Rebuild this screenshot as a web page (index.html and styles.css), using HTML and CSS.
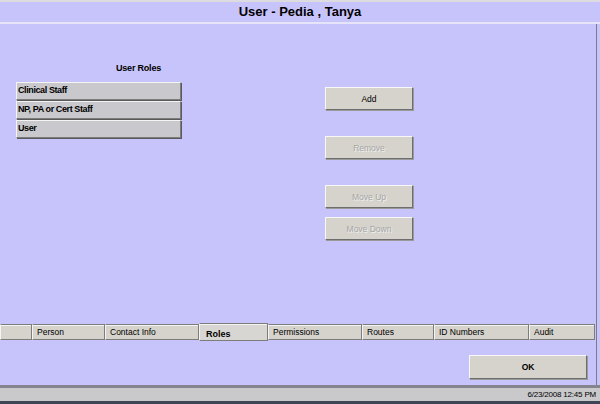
FILE: index.html
```html
<!DOCTYPE html>
<html>
<head>
<meta charset="utf-8">
<link rel="stylesheet" href="styles.css">
</head>
<body>
<div class="screen">
  <div class="topstrip"></div>
  <div class="titlebar">User - Pedia , Tanya</div>
  <div class="frame">
    <div class="main">
      <div class="roles">
        <div class="roles-label">User Roles</div>
        <div class="role-list">
          <div class="role">Clinical Staff</div>
          <div class="role">NP, PA or Cert Staff</div>
          <div class="role">User</div>
        </div>
      </div>
      <div class="actions">
        <div class="btn btn-add">Add</div>
        <div class="btn btn-disabled btn-remove">Remove</div>
        <div class="btn btn-disabled btn-up">Move Up</div>
        <div class="btn btn-disabled btn-down">Move Down</div>
      </div>
    </div>
    <div class="tabs">
      <div class="tab t-blank"></div>
      <div class="tab t-person">Person</div>
      <div class="tab t-contact">Contact Info</div>
      <div class="tab t-roles active">Roles</div>
      <div class="tab t-perm">Permissions</div>
      <div class="tab t-routes">Routes</div>
      <div class="tab t-id">ID Numbers</div>
      <div class="tab t-audit">Audit</div>
    </div>
    <div class="okrow">
      <div class="btn btn-ok">OK</div>
    </div>
  </div>
  <div class="rule"></div>
  <div class="status">6/23/2008 12:45 PM</div>
  <div class="taskbar"></div>
</div>
</body>
</html>
```

FILE: styles.css
```css
html, body {
  margin: 0;
  padding: 0;
}
body {
  width: 600px;
  height: 404px;
  overflow: hidden;
  background: #c7c4fb;
  font-family: "Liberation Sans", Arial, sans-serif;
  color: #000;
}
.screen {
  width: 600px;
  height: 404px;
  display: flex;
  flex-direction: column;
}
.topstrip {
  height: 2px;
  background: #dcdce0;
}
.titlebar {
  height: 20px;
  line-height: 20px;
  text-align: center;
  font-weight: bold;
  font-size: 13px;
  background: #c7c4fb;
  border-bottom: 2px solid #e6e4f8;
}
.frame {
  width: 596px;
  border-right: 1px solid #7a7a8a;
  display: flex;
  flex-direction: column;
}
.main {
  height: 299px;
  display: flex;
}
.roles {
  margin-left: 16px;
  width: 165px;
  padding-top: 38px;
}
.roles-label {
  margin-left: 100px;
  height: 13px;
  line-height: 13px;
  font-size: 9px;
  font-weight: bold;
  letter-spacing: -0.2px;
}
.role-list {
  margin-top: 7px;
  display: flex;
  flex-direction: column;
  gap: 1px;
}
.role {
  height: 16px;
  line-height: 15px;
  background: #c9c8cc;
  border-top: 1px solid #f4f4f4;
  border-left: 1px solid #f4f4f4;
  border-right: 1px solid #7c7c7c;
  border-bottom: 1px solid #7c7c7c;
  box-shadow: 1px 1px 0 #5a5a5a;
  padding-left: 1px;
  font-size: 9px;
  font-weight: bold;
  letter-spacing: -0.4px;
}
.actions {
  margin-left: 144px;
  padding-top: 63px;
  width: 88px;
  display: flex;
  flex-direction: column;
}
.btn {
  box-sizing: border-box;
  height: 23px;
  background: #d6d3cc;
  border-top: 1px solid #f8f8f8;
  border-left: 1px solid #f8f8f8;
  border-right: 1px solid #6e6e6e;
  border-bottom: 1px solid #6e6e6e;
  box-shadow: 1px 1px 0 #9a9a9a;
  display: flex;
  align-items: center;
  justify-content: center;
  font-size: 8.5px;
}
.btn-disabled {
  color: #a6a6a6;
  text-shadow: 1px 1px 0 #f0f0f0;
}
.btn-remove { margin-top: 26px; }
.btn-up { margin-top: 26px; }
.btn-down { margin-top: 9px; }
.tabs {
  height: 18px;
  display: flex;
  align-items: flex-start;
}
.tab {
  box-sizing: border-box;
  margin-top: 1px;
  height: 16px;
  line-height: 14px;
  background: #d6d3cc;
  border: 1px solid #7c7c7c;
  border-left-color: #f4f4f4;
  box-shadow: inset 0 1px 0 #f4f4f4;
  padding-left: 4px;
  font-size: 8.5px;
  white-space: nowrap;
}
.t-blank { width: 32px; }
.t-person { width: 73px; }
.t-contact { width: 94px; }
.t-roles { width: 69px; }
.t-perm { width: 94px; }
.t-routes { width: 72px; }
.t-id { width: 95px; }
.t-audit { width: 66px; }
.tab.active {
  margin-top: 0;
  height: 18px;
  line-height: 20px;
  padding-left: 6px;
  font-weight: bold;
  font-size: 9px;
  background: #d8d6d2;
}
.okrow {
  height: 44px;
  display: flex;
  justify-content: flex-end;
  align-items: flex-start;
}
.btn-ok {
  margin-top: 14px;
  margin-right: 9px;
  width: 118px;
  height: 24px;
  font-weight: bold;
  font-size: 8.5px;
}
.rule {
  height: 3px;
  background: #858590;
}
.status {
  height: 13px;
  line-height: 14px;
  background: #c9c9cb;
  text-align: right;
  padding-right: 4px;
  font-size: 8px;
  letter-spacing: -0.2px;
}
.taskbar {
  flex: 1;
  background: #3e4656;
}
```
